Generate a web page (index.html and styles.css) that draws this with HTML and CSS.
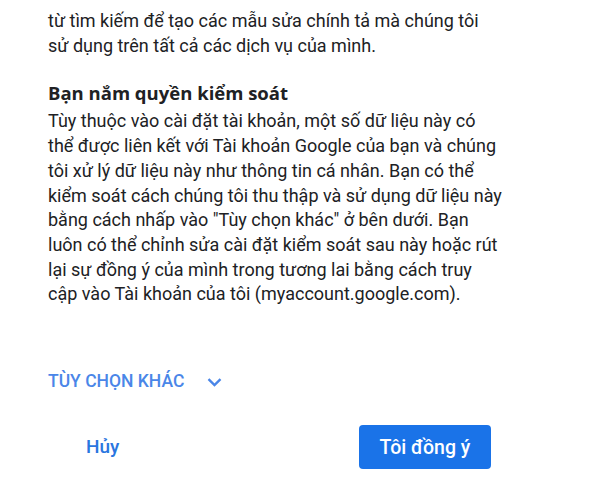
FILE: index.html
```html
<!DOCTYPE html>
<html lang="vi">
<head>
<meta charset="utf-8">
<link rel="stylesheet" href="styles.css">
</head>
<body>
<div class="dialog">
  <div class="content">
    <p class="text">từ tìm kiếm để tạo các mẫu sửa chính tả mà chúng tôi<br>sử dụng trên tất cả các dịch vụ của mình.</p>
    <h2 class="heading">Bạn nắm quyền kiểm soát</h2>
    <p class="text">Tùy thuộc vào cài đặt tài khoản, một số dữ liệu này có<br>thể được liên kết với Tài khoản Google của bạn và chúng<br>tôi xử lý dữ liệu này như thông tin cá nhân. Bạn có thể<br>kiểm soát cách chúng tôi thu thập và sử dụng dữ liệu này<br>bằng cách nhấp vào "Tùy chọn khác" ở bên dưới. Bạn<br>luôn có thể chỉnh sửa cài đặt kiểm soát sau này hoặc rút<br>lại sự đồng ý của mình trong tương lai bằng cách truy<br>cập vào Tài khoản của tôi (myaccount.google.com).</p>
  </div>
  <div class="more">
    <span class="more-label">TÙY CHỌN KHÁC</span>
    <svg class="chev" width="15" height="9" viewBox="0 0 15 9"><path d="M1.5 1.2 L7.5 7 L13.5 1.2" fill="none" stroke="#4a86e8" stroke-width="2.4"/></svg>
  </div>
  <div class="actions">
    <button class="btn-cancel">Hủy</button>
    <button class="btn-agree">Tôi đồng ý</button>
  </div>
</div>
</body>
</html>
```
FILE: styles.css
```css
html, body {
  margin: 0;
  padding: 0;
  background: #ffffff;
}
body {
  font-family: Roboto, "Liberation Sans", Arial, sans-serif;
}
.dialog {
  width: 607px;
}
.content {
  padding: 9px 0 0 48px;
}
.text {
  margin: 0;
  font-size: 18px;
  line-height: 24.7px;
  color: #202124;
}
.heading {
  margin: 23px 0 4px 0;
  font-family: "Open Sans", Roboto, sans-serif;
  font-size: 18.5px;
  line-height: 24px;
  font-weight: 700;
  color: #202124;
}
.more {
  display: flex;
  align-items: center;
  gap: 23px;
  padding-left: 48px;
  margin-top: 64px;
}
.more-label {
  font-size: 17.5px;
  font-weight: 500;
  color: #4a86e8;
  line-height: 20px;
}
.chev {
  display: block;
  margin-top: 2px;
}
.actions {
  display: flex;
  align-items: center;
  justify-content: space-between;
  padding: 0 116px 0 60px;
  margin-top: 34px;
}
.btn-cancel {
  background: none;
  border: none;
  font-family: inherit;
  font-size: 19px;
  font-weight: 500;
  color: #2a76e0;
  padding: 0 26px 1px 26px;
  height: 44px;
}
.btn-agree {
  background: #1a73e8;
  color: #ffffff;
  border: none;
  border-radius: 4px;
  font-family: inherit;
  font-size: 19.5px;
  font-weight: 500;
  width: 132px;
  height: 44px;
}
```
